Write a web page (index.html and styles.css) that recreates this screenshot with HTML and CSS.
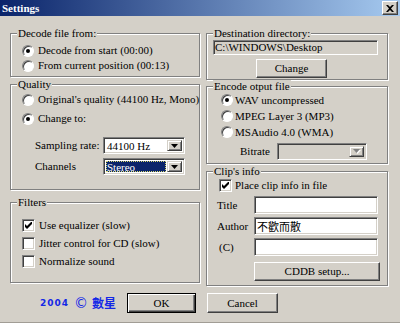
FILE: index.html
```html
<!DOCTYPE html>
<html>
<head>
<meta charset="utf-8">
<title>Settings</title>
<link rel="stylesheet" href="styles.css">
</head>
<body>
<div class="window">
  <div class="titlebar">
    <span class="title">Settings</span>
    <span class="close"><svg width="8" height="7" viewBox="0 0 8 7"><path d="M0 0h2l2 2 2-2h2L5 3.5 8 7H6L4 5 2 7H0l3-3.5z" fill="#000"/></svg></span>
  </div>
  <div class="main">
    <div class="col">
      <div class="group g-decode">
        <div class="legend">Decode file from:</div>
        <div class="opts decode-opts">
          <div class="opt"><span class="radio on"></span>Decode from start (00:00)</div>
          <div class="opt"><span class="radio"></span>From current position (00:13)</div>
        </div>
      </div>
      <div class="group g-quality">
        <div class="legend">Quality</div>
        <div class="opts quality-opts">
          <div class="opt"><span class="radio"></span>Original's quality (44100 Hz, Mono)</div>
          <div class="opt"><span class="radio on"></span>Change to:</div>
        </div>
        <div class="params">
          <div class="param"><span class="param-label">Sampling rate:</span>
            <div class="combo field w82"><span class="value">44100 Hz</span><span class="drop"><svg width="7" height="4" viewBox="0 0 7 4"><path d="M0 0h7L3.5 4z" fill="#000"/></svg></span></div>
          </div>
          <div class="param"><span class="param-label">Channels</span>
            <div class="combo field w82"><span class="value sel">Stereo</span><span class="drop"><svg width="7" height="4" viewBox="0 0 7 4"><path d="M0 0h7L3.5 4z" fill="#000"/></svg></span></div>
          </div>
        </div>
      </div>
      <div class="group g-filters">
        <div class="legend">Filters</div>
        <div class="checks">
          <div class="chk-row"><span class="check on"><svg width="7" height="7" viewBox="0 0 7 7"><path d="M0 2L2 4L7-1V2L2 7L0 5z" fill="#000"/></svg></span>Use equalizer (slow)</div>
          <div class="chk-row"><span class="check"></span>Jitter control for CD (slow)</div>
          <div class="chk-row"><span class="check"></span>Normalize sound</div>
        </div>
      </div>
    </div>
    <div class="col">
      <div class="group g-dest">
        <div class="legend">Destination directory:</div>
        <div class="field dirfield">C:\WINDOWS\Desktop</div>
        <div class="btn btn-change">Change</div>
      </div>
      <div class="group g-encode">
        <div class="legend">Encode otput file</div>
        <div class="opts enc-opts">
          <div class="opt enc"><span class="radio on"></span>WAV uncompressed</div>
          <div class="opt enc"><span class="radio"></span>MPEG Layer 3 (MP3)</div>
          <div class="opt enc"><span class="radio"></span>MSAudio 4.0 (WMA)</div>
        </div>
        <div class="bitrate">
          <span class="bitrate-label">Bitrate</span>
          <div class="combo field disabled w90"><span class="value"></span><span class="drop"><svg width="8" height="5" viewBox="0 0 8 5"><path d="M1 1h7L4.5 5z" fill="#fff"/><path d="M0 0h7L3.5 4z" fill="#808080"/></svg></span></div>
        </div>
      </div>
      <div class="group g-clip">
        <div class="legend">Clip's info</div>
        <div class="chk-row clip-chk"><span class="check on"><svg width="7" height="7" viewBox="0 0 7 7"><path d="M0 2L2 4L7-1V2L2 7L0 5z" fill="#000"/></svg></span>Place clip info in file</div>
        <div class="info-rows">
          <div class="info-row"><span class="info-label">Title</span><div class="field input"></div></div>
          <div class="info-row"><span class="info-label">Author</span><div class="field input cjk">不歡而散</div></div>
          <div class="info-row"><span class="info-label c-label">(C)</span><div class="field input"></div></div>
        </div>
        <div class="btn btn-cddb">CDDB setup...</div>
      </div>
    </div>
  </div>
  <div class="footer">
    <div class="brand"><span class="year">2004</span><span class="copy">©</span><span class="name">數星</span></div>
    <div class="btn btn-default">OK</div>
    <div class="btn btn-cancel">Cancel</div>
  </div>
</div>
</body>
</html>
```
FILE: styles.css
```css
* { box-sizing: border-box; }
html, body { margin: 0; padding: 0; }
body {
  width: 400px;
  height: 323px;
  overflow: hidden;
  background: #d4d0c8;
  font: 11px/13px "Liberation Serif", "Noto Sans CJK TC", serif;
  color: #000;
}
.window { height: 323px; border-bottom: 1px solid #a19d95; }

.titlebar {
  height: 16px;
  display: flex;
  align-items: center;
  justify-content: space-between;
  padding: 0 2px 0 2px;
  background: linear-gradient(to right, #0a246a, #a6caf0);
  color: #fff;
  font-weight: bold;
}
.close {
  width: 16px;
  height: 14px;
  display: flex;
  align-items: center;
  justify-content: center;
  background: #d4d0c8;
  border: 1px solid;
  border-color: #fff #404040 #404040 #fff;
  box-shadow: inset -1px -1px #808080;
}

.main {
  display: grid;
  grid-template-columns: 190px 182px;
  column-gap: 6px;
  padding: 17px 0 0 10px;
  align-items: start;
}
.col { display: flex; flex-direction: column; }

.group {
  border: 1px solid #808080;
  box-shadow: inset 1px 1px #fff, 1px 1px #fff;
}
.legend {
  width: max-content;
  margin: -7px 0 0 6px;
  padding: 0 1px;
  background: #d4d0c8;
  line-height: 13px;
}
.g-decode { height: 44px; }
.g-quality { height: 106px; margin-top: 7px; }
.g-filters { height: 81px; margin-top: 12px; }
.g-dest { height: 47px; }
.g-encode { height: 78px; margin-top: 6px; }
.g-clip { height: 115px; margin-top: 7px; }

.opts { display: flex; flex-direction: column; padding: 0 0 0 11px; }
.decode-opts { margin-top: 3px; }
.quality-opts { margin-top: 1px; gap: 4px; }
.opt {
  display: flex;
  align-items: center;
  height: 15px;
  white-space: nowrap;
}
.radio {
  flex: none;
  position: relative;
  width: 12px;
  height: 12px;
  margin-right: 4px;
  border-radius: 50%;
  border: 1px solid;
  border-color: #808080 #fff #fff #808080;
  box-shadow: inset 1px 1px #404040;
  background: #fff;
}
.radio.on::after {
  content: "";
  position: absolute;
  left: 3px;
  top: 3px;
  width: 4px;
  height: 4px;
  border-radius: 50%;
  background: #000;
}

.params {
  margin-top: 11px;
  padding-left: 24px;
  display: flex;
  flex-direction: column;
  gap: 4px;
}
.param { display: flex; align-items: center; height: 17px; }
.param-label { width: 68px; }

.field {
  border: 1px solid;
  border-color: #808080 #fff #fff #808080;
  box-shadow: inset 1px 1px #404040, inset -1px -1px #d4d0c8;
  background: #fff;
}
.combo {
  display: flex;
  height: 17px;
  padding: 2px;
}
.w82 { width: 82px; }
.w90 { width: 90px; }
.combo .value {
  flex: 1;
  padding-left: 1px;
  line-height: 13px;
  white-space: nowrap;
}
.combo .value.sel {
  margin: 0 1px 0 0;
  background: #0a246a;
  color: #fff;
  outline: 1px dotted #d8d870;
  outline-offset: -1px;
}
.drop {
  flex: none;
  width: 15px;
  display: flex;
  align-items: center;
  justify-content: center;
  background: #d4d0c8;
  border: 1px solid;
  border-color: #d4d0c8 #404040 #404040 #d4d0c8;
  box-shadow: inset 1px 1px #fff, inset -1px -1px #808080;
}
.combo.disabled { background: #d4d0c8; }

.checks {
  margin-top: 8px;
  padding-left: 11px;
  display: flex;
  flex-direction: column;
  gap: 2px;
}
.chk-row {
  display: flex;
  align-items: center;
  height: 16px;
  white-space: nowrap;
}
.check {
  flex: none;
  width: 13px;
  height: 13px;
  margin-right: 4px;
  display: flex;
  align-items: center;
  justify-content: center;
  border: 1px solid;
  border-color: #808080 #fff #fff #808080;
  box-shadow: inset 1px 1px #404040, inset -1px -1px #d4d0c8;
  background: #fff;
}

.dirfield {
  margin-left: 6px;
  width: 165px;
  height: 15px;
  padding-left: 1px;
  background: #d4d0c8;
  line-height: 13px;
  white-space: nowrap;
}
.btn {
  display: flex;
  align-items: center;
  justify-content: center;
  background: #d4d0c8;
  border: 1px solid;
  border-color: #fff #404040 #404040 #fff;
  box-shadow: inset -1px -1px #808080;
}
.btn-change { margin: 4px 0 0 49px; width: 71px; height: 19px; }

.enc-opts { margin-top: -1px; padding-left: 14px; }
.opt.enc { height: 16px; }
.opt.enc .radio { margin-right: 2px; }
.bitrate {
  margin-top: 3px;
  padding-left: 33px;
  display: flex;
  align-items: center;
  height: 17px;
}
.bitrate-label { width: 37px; }

.clip-chk { height: 15px; padding-left: 12px; }
.clip-chk .check { margin-right: 3px; }
.info-rows {
  margin-top: 3px;
  display: flex;
  flex-direction: column;
  gap: 3px;
}
.info-row {
  display: flex;
  align-items: center;
  padding-left: 10px;
}
.info-label { width: 37px; }
.c-label { padding-left: 2px; }
.input {
  width: 124px;
  height: 18px;
  padding: 1px 2px;
  line-height: 14px;
}
.cjk { font: 11px/14px "Noto Sans CJK TC", sans-serif; }
.btn-cddb { margin: 6px 0 0 47px; width: 126px; height: 19px; }

.footer {
  display: flex;
  align-items: center;
  height: 20px;
  margin-top: 7px;
  padding-left: 40px;
}
.brand {
  width: 87px;
  display: flex;
  align-items: center;
  color: #1428e6;
}
.year {
  font: bold 9px/10px "DejaVu Sans", sans-serif;
  letter-spacing: 1px;
}
.copy {
  margin-left: 5px;
  font: 14px/14px "DejaVu Sans", sans-serif;
}
.name {
  margin-left: 4px;
  font: bold 12px/14px "Noto Sans CJK TC", sans-serif;
}
.btn-default {
  width: 69px;
  height: 20px;
  border-color: #000;
  box-shadow: inset 1px 1px #fff, inset -1px -1px #404040, inset -2px -2px #808080;
}
.btn-cancel { margin-left: 11px; width: 71px; height: 20px; }
```
